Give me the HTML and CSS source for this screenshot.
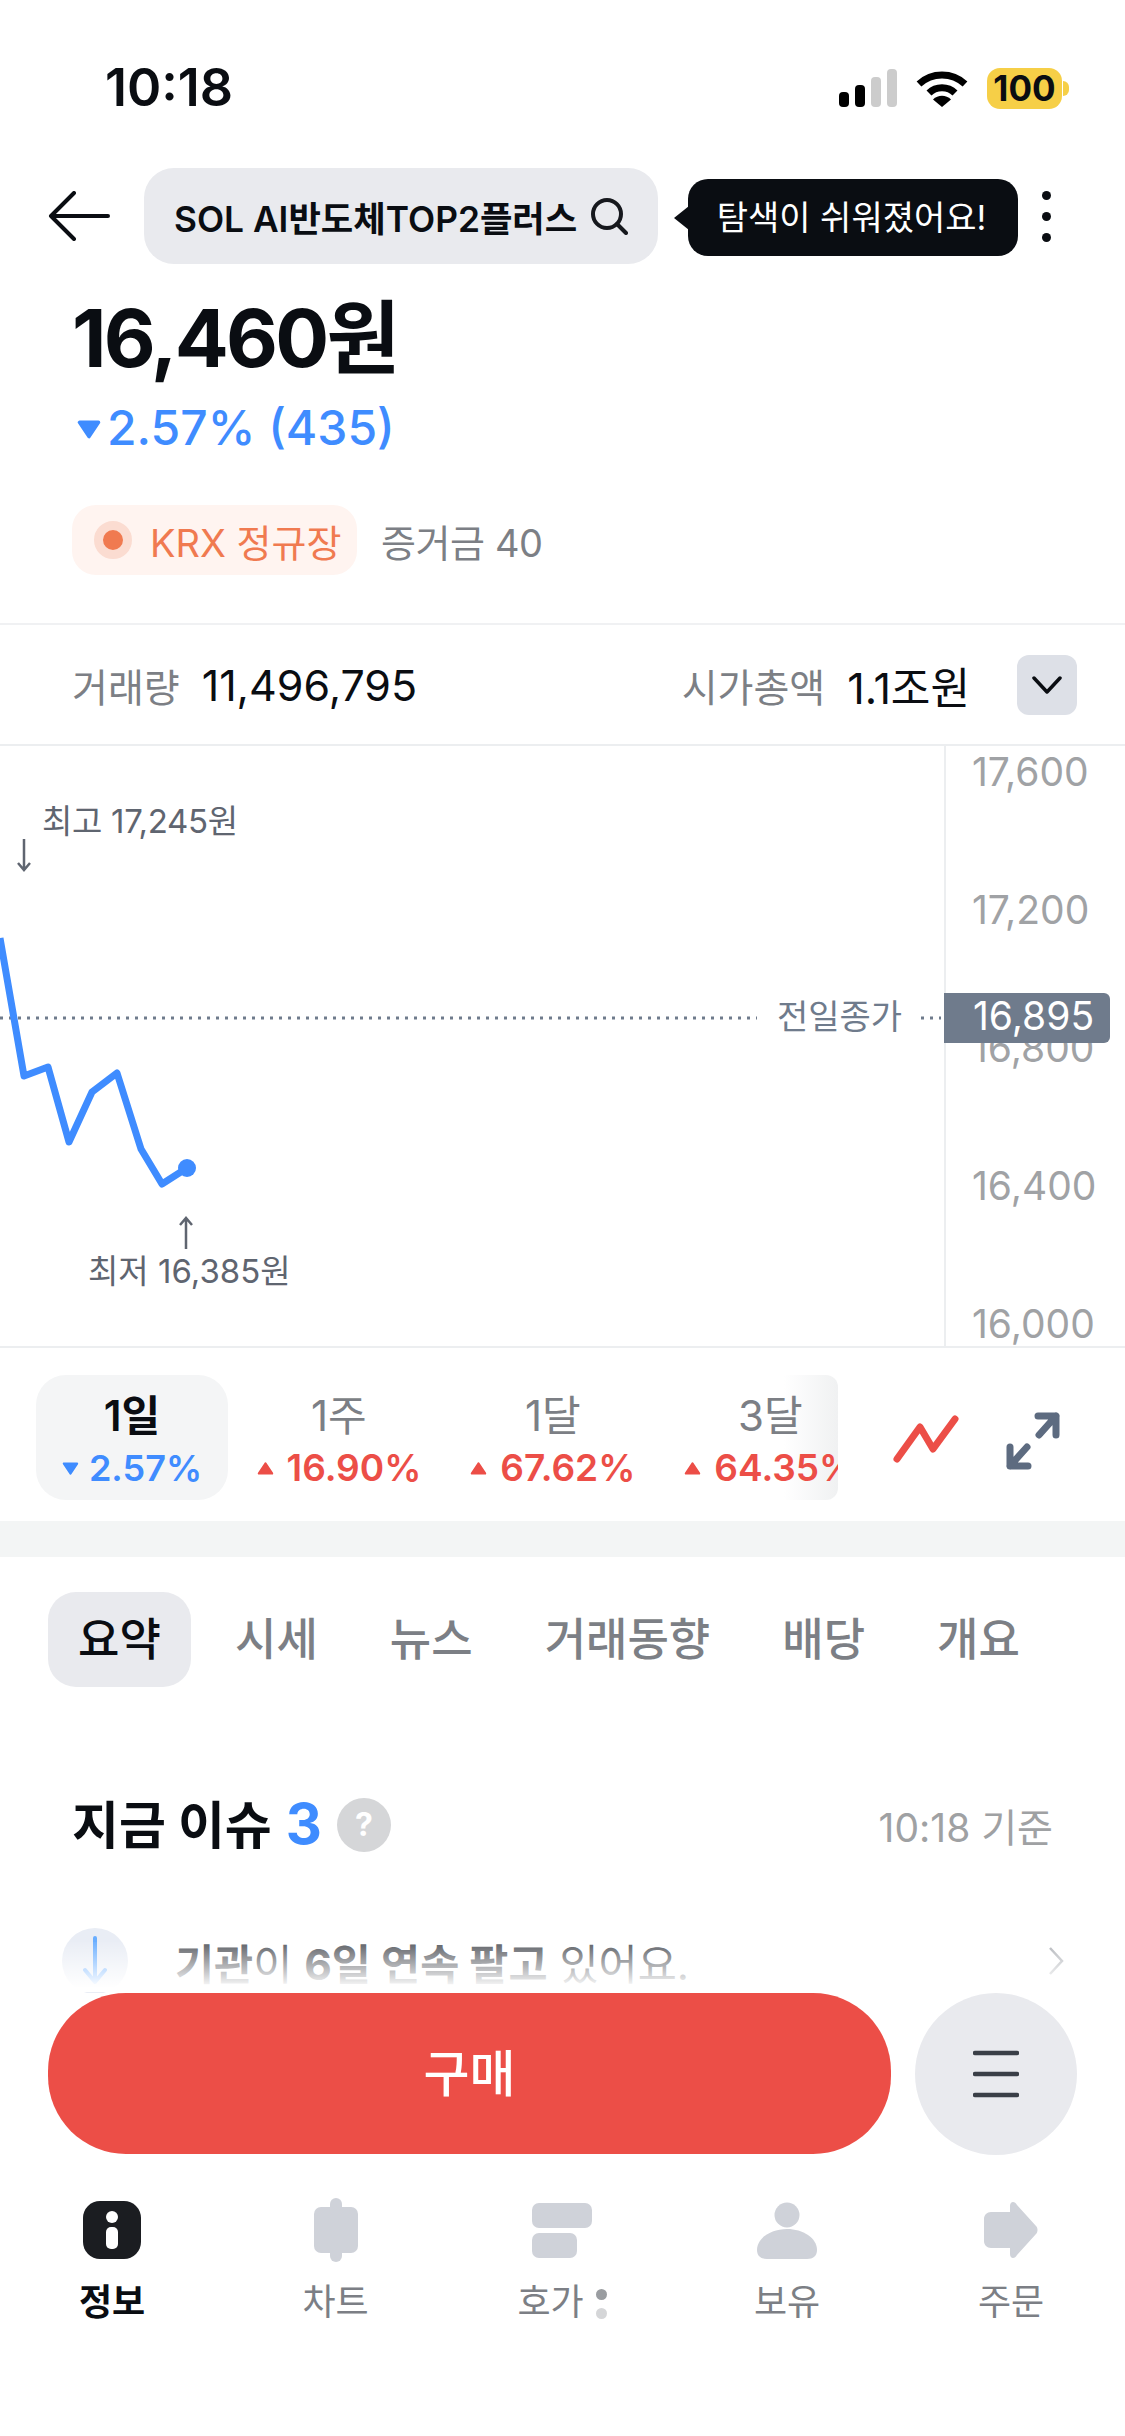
FILE: index.html
```html
<!DOCTYPE html>
<html lang="ko">
<head>
    <meta charset="UTF-8">
    <title>SOL AI반도체TOP2플러스</title>
    <link rel="stylesheet" href="styles.css">
</head>
<body>
<svg class="defs" width="0" height="0">
    <symbol id="tri-down" viewBox="0 0 20 16"><path d="M2 2H18L10 14Z" fill="currentColor" stroke="currentColor" stroke-width="3" stroke-linejoin="round"/></symbol>
    <symbol id="tri-up" viewBox="0 0 20 16"><path d="M2 14H18L10 2Z" fill="currentColor" stroke="currentColor" stroke-width="3" stroke-linejoin="round"/></symbol>
</svg>
<div id="page">
    <main id="content">
        <div class="status">
            <span class="time">10:18</span>
            <div class="status-icons">
                <svg class="signal" width="58" height="38" viewBox="0 0 58 38">
                    <rect x="0" y="23" width="10" height="15" rx="4" fill="#000"/>
                    <rect x="16" y="16" width="10" height="22" rx="4" fill="#000"/>
                    <rect x="32" y="8" width="10" height="30" rx="4" fill="#ccc"/>
                    <rect x="48" y="0" width="10" height="38" rx="4" fill="#ccc"/>
                </svg>
                <svg class="wifi" width="52" height="38" viewBox="0 0 52 38">
                    <path d="M3 15C16 3 36 3 49 15" fill="none" stroke="#000" stroke-width="7"/>
                    <path d="M13 24C20 17 32 17 39 24" fill="none" stroke="#000" stroke-width="7"/>
                    <path d="M17 30.500C22 25.500 30 25.500 35 30.500L26 38Z" fill="#000"/>
                </svg>
                <div class="battery">100</div>
            </div>
        </div>

        <header class="top">
            <svg class="back" width="62" height="50" viewBox="0 0 62 50">
                <path d="M60 25H3M26 2L3 25L26 48" fill="none" stroke="#0a0d12" stroke-width="4" stroke-linecap="round" stroke-linejoin="round"/>
            </svg>
            <div class="search">
                <span>SOL AI반도체TOP2플러스</span>
                <svg width="38" height="38" viewBox="0 0 38 38">
                    <circle cx="17" cy="17" r="14" fill="none" stroke="#16181d" stroke-width="4"/>
                    <path d="M27 27L36 36" stroke="#16181d" stroke-width="4" stroke-linecap="round"/>
                </svg>
            </div>
            <div class="tip">탐색이 쉬워졌어요!</div>
            <div class="kebab"><i></i><i></i><i></i></div>
        </header>

        <section class="price">
            <div class="now">16,460원</div>
            <div class="change"><svg class="tri"><use href="#tri-down"/></svg>2.57% (435)</div>
            <div class="meta">
                <div class="chip"><i class="dot"></i>KRX 정규장</div>
                <span class="margin">증거금 40</span>
            </div>
        </section>

        <section class="stats">
            <span class="stat-name">거래량</span>
            <span class="stat-val">11,496,795</span>
            <span class="stat-name push">시가총액</span>
            <span class="stat-val">1.1조원</span>
            <div class="more">
                <svg width="30" height="18" viewBox="0 0 30 18"><path d="M2 2L15 16L28 2" fill="none" stroke="#0a0d12" stroke-width="3.500" stroke-linecap="round" stroke-linejoin="round"/></svg>
            </div>
        </section>

        <section class="chart">
            <div class="plot">
                <svg class="lines" width="944" height="602" viewBox="0 0 944 602">
                    <path d="M0 272H757M921 272H941" stroke="#6f7b8c" stroke-width="3" stroke-dasharray="3 6"/>
                    <polyline points="0,192 24,330 48,321 69,396 92,346 117,327 141,403 162,438 187,422" fill="none" stroke="#3f8cff" stroke-width="7" stroke-linejoin="round"/>
                    <circle cx="187" cy="422" r="9" fill="#3f8cff"/>
                    <path d="M24 93V124M18 117L24 124L30 117" fill="none" stroke="#5f6570" stroke-width="2.500"/>
                    <path d="M186 503V472M180 479L186 472L192 479" fill="none" stroke="#5f6570" stroke-width="2.500"/>
                </svg>
                <span class="mark mark-high">최고 17,245원</span>
                <span class="mark mark-low">최저 16,385원</span>
                <span class="mark mark-prev">전일종가</span>
            </div>
            <div class="axis">
                <span>17,600</span>
                <span>17,200</span>
                <span>16,800</span>
                <span>16,400</span>
                <span>16,000</span>
            </div>
            <div class="prev-tag">16,895</div>
        </section>

        <section class="periods">
            <div class="period-strip">
                <div class="period select">
                    <b>1일</b>
                    <span class="down"><svg class="tri-s"><use href="#tri-down"/></svg>2.57%</span>
                </div>
                <div class="period">
                    <b>1주</b>
                    <span class="up"><svg class="tri-s"><use href="#tri-up"/></svg>16.90%</span>
                </div>
                <div class="period">
                    <b>1달</b>
                    <span class="up"><svg class="tri-s"><use href="#tri-up"/></svg>67.62%</span>
                </div>
                <div class="period">
                    <b>3달</b>
                    <span class="up"><svg class="tri-s"><use href="#tri-up"/></svg>64.35%</span>
                </div>
            </div>
            <svg class="chart-type" width="66" height="50" viewBox="0 0 66 50">
                <polyline points="4,44 27,12 40,34 62,4" fill="none" stroke="#ec4e47" stroke-width="7" stroke-linecap="round" stroke-linejoin="round"/>
            </svg>
            <svg class="expand" width="54" height="58" viewBox="0 0 54 58">
                <path d="M32 4H50V23M50 4L33 23M22 54H4V35M4 54L21 35" fill="none" stroke="#5d6b80" stroke-width="7" stroke-linecap="round" stroke-linejoin="round"/>
            </svg>
        </section>

        <div class="band"></div>

        <nav class="tabs">
            <span class="tab select">요약</span>
            <span class="tab">시세</span>
            <span class="tab">뉴스</span>
            <span class="tab">거래동향</span>
            <span class="tab">배당</span>
            <span class="tab">개요</span>
        </nav>

        <section class="issue">
            <div class="issue-head">
                <h2>지금 이슈 <em>3</em></h2>
                <span class="help">?</span>
                <span class="issue-time">10:18 기준</span>
            </div>
            <div class="issue-row">
                <div class="issue-icon">
                    <svg width="24" height="50" viewBox="0 0 24 50"><path d="M12 2V46M2 34L12 46L22 34" fill="none" stroke="#6aaeff" stroke-width="4" stroke-linecap="round" stroke-linejoin="round"/></svg>
                </div>
                <p><b>기관</b>이 <b>6일 연속 팔고</b> 있어요.</p>
                <svg class="chev" width="16" height="30" viewBox="0 0 16 30"><path d="M2 2L14 15L2 28" fill="none" stroke="#b0b3b8" stroke-width="2.500"/></svg>
            </div>
            <div class="fade"></div>
        </section>
    </main>

    <div class="actions">
        <button class="buy">구매</button>
        <button class="menu">
            <svg width="46" height="48" viewBox="0 0 46 48"><path d="M2 3H44M2 24H44M2 45H44" stroke="#3a3f47" stroke-width="4.500" stroke-linecap="round"/></svg>
        </button>
    </div>

    <nav class="bottom">
        <div class="nav-item on">
            <svg width="64" height="64" viewBox="0 0 64 64">
                <rect x="3" y="3" width="58" height="58" rx="17" fill="#1b1d21"/>
                <circle cx="32" cy="19" r="6" fill="#fff"/>
                <rect x="26" y="29" width="12" height="22" rx="5" fill="#fff"/>
            </svg>
            <span>정보</span>
        </div>
        <div class="nav-item">
            <svg width="64" height="64" viewBox="0 0 64 64">
                <rect x="10" y="9" width="44" height="46" rx="7" fill="#cfd2d9"/>
                <rect x="26" y="0" width="12" height="64" rx="6" fill="#cfd2d9"/>
            </svg>
            <span>차트</span>
        </div>
        <div class="nav-item">
            <svg width="64" height="64" viewBox="0 0 64 64">
                <rect x="2" y="5" width="60" height="25" rx="7" fill="#cfd2d9"/>
                <rect x="2" y="35" width="45" height="25" rx="7" fill="#cfd2d9"/>
            </svg>
            <span class="has-dots">호가<i class="dots"><i></i><i></i></i></span>
        </div>
        <div class="nav-item">
            <svg width="64" height="64" viewBox="0 0 64 64">
                <circle cx="32" cy="17" r="12.500" fill="#cfd2d9"/>
                <path d="M2 52C2 40 16 31 32 31C48 31 62 40 62 52C62 58 58 61 52 61H12C6 61 2 58 2 52Z" fill="#cfd2d9"/>
            </svg>
            <span>보유</span>
        </div>
        <div class="nav-item">
            <svg width="64" height="64" viewBox="0 0 64 64">
                <path d="M12 14H31V8C31 3 36 3 38 7L57 28C59 30 59 34 57 36L38 57C36 61 31 61 31 56V50H12C8 50 5 47 5 43V21C5 17 8 14 12 14Z" fill="#cfd2d9"/>
            </svg>
            <span>주문</span>
        </div>
    </nav>
</div>
</body>
</html>
```

FILE: styles.css
```css
* {
    margin: 0;
    padding: 0;
    box-sizing: border-box;
}
html, body {
    width: 1125px;
    height: 2436px;
    overflow: hidden;
    background: #fff;
}
body {
    font-family: "Inter", "Noto Sans CJK KR", sans-serif;
    color: #0a0d12;
}
.defs {
    position: absolute;
}
#page {
    height: 2436px;
    display: flex;
    flex-direction: column;
}
#content {
    height: 1993px;
    overflow: hidden;
}

/* status bar */
.status {
    height: 168px;
    padding: 60px 63px 52px 105px;
    display: flex;
    justify-content: space-between;
    align-items: center;
}
.time {
    font-size: 52px;
    font-weight: 600;
    line-height: 56px;
}
.status-icons {
    display: flex;
    align-items: center;
    gap: 19px;
}
.battery {
    position: relative;
    width: 75px;
    height: 41px;
    background: #f6cf47;
    border-radius: 13px;
    font-size: 35px;
    font-weight: 700;
    line-height: 41px;
    text-align: center;
}
.battery::after {
    content: "";
    position: absolute;
    left: 76px;
    top: 13px;
    width: 6px;
    height: 15px;
    background: #f6cf47;
    border-radius: 0 8px 8px 0;
}

/* header */
.top {
    height: 96px;
    padding-left: 48px;
    display: flex;
    align-items: center;
}
.back {
    margin-right: 34px;
}
.search {
    width: 514px;
    height: 96px;
    padding: 0 30px;
    background: #e9eaee;
    border-radius: 30px;
    display: flex;
    align-items: center;
    justify-content: space-between;
    font-size: 35.300px;
    font-weight: 600;
    white-space: nowrap;
}
.tip {
    position: relative;
    width: 330px;
    height: 77px;
    margin: 3px 0 0 30px;
    padding-right: 3px;
    background: #0a0d12;
    border-radius: 20px;
    color: #fff;
    font-size: 34px;
    line-height: 77px;
    text-align: center;
}
.tip::before {
    content: "";
    position: absolute;
    left: -14px;
    top: 27px;
    border-style: solid;
    border-width: 12px 15px 12px 0;
    border-color: transparent #0a0d12 transparent transparent;
}
.kebab {
    margin-left: 24px;
    display: flex;
    flex-direction: column;
    gap: 12px;
}
.kebab i {
    display: block;
    width: 9px;
    height: 9px;
    border-radius: 50%;
    background: #0a0d12;
}

/* price */
.price {
    padding: 26px 72px 0;
}
.now {
    font-size: 80px;
    font-weight: 700;
    line-height: 96px;
    letter-spacing: -2.700px;
}
.change {
    margin-top: 12px;
    display: flex;
    align-items: center;
    color: #3f8cff;
    font-size: 48px;
    font-weight: 500;
    line-height: 60px;
}
.tri {
    width: 24px;
    height: 19px;
    margin: 2px 6px 0 5px;
}
.meta {
    margin-top: 47px;
    display: flex;
    align-items: center;
    gap: 24px;
}
.chip {
    width: 285px;
    height: 70px;
    padding-left: 22px;
    background: #fff4f0;
    border-radius: 24px;
    display: flex;
    align-items: center;
    gap: 18px;
    color: #f07a50;
    font-size: 38px;
}
.dot {
    width: 38px;
    height: 38px;
    border-radius: 50%;
    background: #f07a50;
    border: 9px solid #fbdcd1;
}
.margin {
    color: #7c7f85;
    font-size: 38px;
    letter-spacing: -0.400px;
}

/* stats row */
.stats {
    height: 123px;
    margin-top: 48px;
    padding: 0 48px 0 72px;
    border-top: 2px solid #f0f1f3;
    border-bottom: 2px solid #eceef0;
    display: flex;
    align-items: center;
}
.stat-name {
    color: #7c7f85;
    font-size: 39px;
}
.stat-val {
    margin-left: 22px;
    font-size: 43px;
}
.push {
    margin-left: auto;
}
.more {
    width: 60px;
    height: 60px;
    margin-left: 47px;
    background: #dde0e7;
    border-radius: 12px;
    display: flex;
    align-items: center;
    justify-content: center;
}

/* chart */
.chart {
    position: relative;
    height: 602px;
    border-bottom: 2px solid #eceef0;
    display: flex;
}
.plot {
    position: relative;
    width: 944px;
}
.lines {
    display: block;
}
.mark {
    position: absolute;
    color: #5f6570;
    font-size: 33px;
    line-height: 44px;
    white-space: nowrap;
}
.mark-high {
    left: 42px;
    top: 53px;
    letter-spacing: -0.300px;
}
.mark-low {
    left: 88px;
    top: 503px;
}
.mark-prev {
    left: 777px;
    top: 249px;
    color: #6f7b8c;
    font-size: 34px;
}
.axis {
    width: 181px;
    padding: 2px 0 0 26px;
    border-left: 2px solid #eceef0;
    display: flex;
    flex-direction: column;
    gap: 90px;
    color: #a0a2a5;
    font-size: 39px;
    line-height: 48px;
}
.prev-tag {
    position: absolute;
    left: 944px;
    top: 247px;
    width: 166px;
    height: 50px;
    padding-left: 29px;
    background: #6f7b8c;
    border-radius: 0 6px 6px 0;
    color: #fff;
    font-size: 39px;
    line-height: 46px;
}

/* period tabs */
.periods {
    height: 173px;
    padding: 27px 0 0 36px;
    display: flex;
    align-items: flex-start;
}
.period-strip {
    position: relative;
    width: 802px;
    height: 125px;
    overflow: hidden;
    display: flex;
    border-radius: 0 12px 12px 0;
}
.period-strip::after {
    content: "";
    position: absolute;
    right: 0;
    top: 0;
    bottom: 0;
    width: 54px;
    background: linear-gradient(to right, rgba(244, 245, 246, 0), #f0f1f2);
}
.period {
    position: relative;
    z-index: 1;
    flex-shrink: 0;
    padding: 0 24.500px;
    display: flex;
    flex-direction: column;
    align-items: center;
    color: #7c7f85;
}
.period b {
    height: 68px;
    font-size: 42px;
    font-weight: 400;
    line-height: 82px;
}
.period span {
    display: flex;
    align-items: center;
    font-size: 37px;
    font-weight: 600;
    line-height: 50px;
}
.period.select {
    width: 192px;
    margin-right: 4px;
    padding: 0;
    background: #f4f5f6;
    border-radius: 30px;
    color: #0a0d12;
}
.period.select b {
    font-weight: 600;
}
.period.select span {
    font-size: 36px;
}
.period.select .tri-s {
    margin-right: 10px;
}
.tri-s {
    width: 17px;
    height: 13px;
    margin-right: 13px;
}
.up {
    color: #ec4e47;
}
.down {
    color: #3f8cff;
}
.chart-type {
    margin: 40px 0 0 55px;
}
.expand {
    margin: 37px 0 0 47px;
}
.band {
    height: 36px;
    background: #f3f5f5;
}

/* section tabs */
.tabs {
    height: 95px;
    margin-top: 35px;
    padding-left: 48px;
    display: flex;
    color: #7c7f85;
    font-size: 45px;
    font-weight: 500;
}
.tab {
    padding: 0 36px;
    line-height: 96px;
    white-space: nowrap;
}
.tab.select {
    width: 143px;
    margin-right: 8px;
    padding: 0;
    text-align: center;
    background: #e9eaee;
    border-radius: 28px;
    color: #0a0d12;
}

/* issue */
.issue {
    position: relative;
    height: 305px;
    padding: 0 61px 0 62px;
}
.issue-head {
    padding: 104px 11px 0 10px;
    display: flex;
    align-items: center;
}
.issue-head h2 {
    font-size: 51px;
    font-weight: 700;
    line-height: 66px;
    white-space: nowrap;
}
.issue-head em {
    margin-left: 2px;
    color: #3f8cff;
    font-style: normal;
    font-size: 56px;
}
.help {
    width: 54px;
    height: 54px;
    margin-left: 15px;
    border-radius: 50%;
    background: #d5d6d8;
    color: #fff;
    font-size: 32px;
    font-weight: 700;
    line-height: 54px;
    text-align: center;
}
.issue-time {
    margin-left: auto;
    color: #9fa1a3;
    font-size: 39px;
}
.issue-row {
    margin-top: 69px;
    display: flex;
    align-items: center;
}
.issue-icon {
    width: 66px;
    height: 66px;
    border-radius: 50%;
    background: #e9edf5;
    display: flex;
    align-items: center;
    justify-content: center;
}
.issue-row p {
    margin-left: 47px;
    color: #55585e;
    font-size: 42.500px;
    white-space: nowrap;
}
.issue-row p b {
    font-weight: 700;
}
.chev {
    margin-left: auto;
}
.fade {
    position: absolute;
    left: 0;
    right: 0;
    bottom: 0;
    height: 50px;
    background: linear-gradient(to bottom, rgba(255, 255, 255, 0.05), #fff 92%);
}

/* bottom */
.actions {
    height: 161px;
    padding: 0 48px;
    display: flex;
    justify-content: space-between;
}
.actions button {
    border: 0;
    font-family: inherit;
}
.buy {
    width: 843px;
    height: 161px;
    padding-bottom: 8px;
    background: #ec4e47;
    border-radius: 78px;
    color: #fff;
    font-size: 50px;
    font-weight: 500;
}
.menu {
    width: 162px;
    height: 162px;
    background: #e9eaee;
    border-radius: 50%;
    display: flex;
    align-items: center;
    justify-content: center;
}
.bottom {
    padding-top: 44px;
    display: grid;
    grid-template-columns: 224px 223px 230px 220px 228px;
}
.nav-item {
    display: flex;
    flex-direction: column;
    align-items: center;
    color: #7c7f85;
    font-size: 36px;
    line-height: 46px;
}
.nav-item svg {
    margin-bottom: 17px;
}
.nav-item.on {
    color: #0a0d12;
    font-weight: 700;
}
.has-dots {
    display: flex;
    align-items: center;
    gap: 12px;
}
.dots {
    display: flex;
    flex-direction: column;
    gap: 8px;
    padding-top: 4px;
}
.dots i {
    display: block;
    width: 11px;
    height: 11px;
    border-radius: 50%;
    background: #9a9da1;
}
.dots i + i {
    background: #d5d6d8;
}
```
